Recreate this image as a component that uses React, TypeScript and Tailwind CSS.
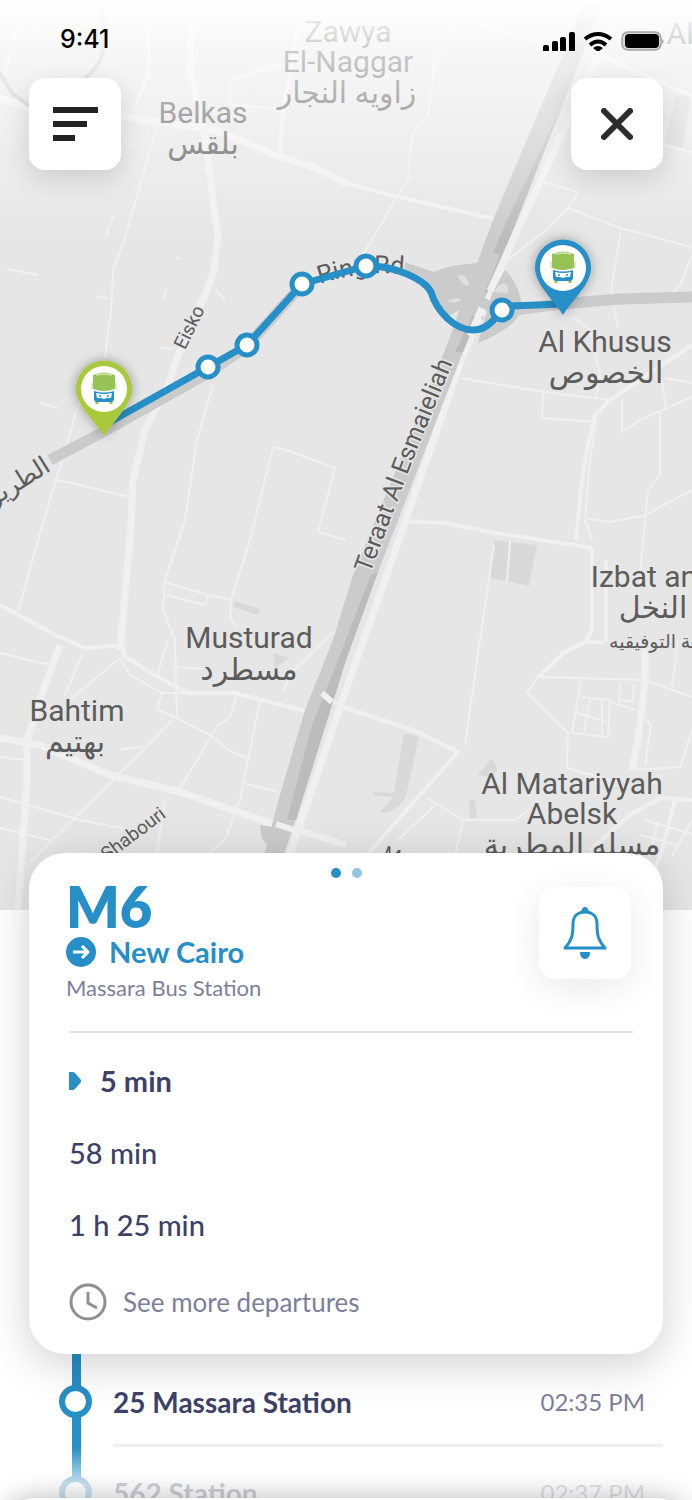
import React from "react";

// Light streets, thin ones first
const thinRoads = [
  "M158 122 L125 238 L113 270 L111 310 L105 358",
  "M230 105 L230 80 L280 65 M230 105 L275 108",
  "M458 15 L435 60 L428 115 L412 135 L408 180 L396 198 L372 240 L362 256",
  "M458 18 L565 52 M540 181 L578 192 L568 208 L540 235 L505 262",
  "M568 208 L620 228 L692 247 M621 230 L611 290 L618 328",
  "M692 255 L680 285 L666 300 L611 296 M563 124 L571 124 M664 145 L692 152",
  "M460 378 L520 388 L560 394 L610 400 M543 392 L542 418 L596 422",
  "M596 422 L590 460 L585 520 L592 540 M575 318 L590 330 L600 375 L596 398",
  "M622 398 L622 432 L640 420 L692 397 M660 410 L660 475 L648 490 L645 520 L640 575",
  "M585 518 L610 522 L645 515 L692 490 M666 378 L692 383 M662 380 L666 410",
  "M213 385 L197 440 L185 520 L165 580 L163 610 L175 640 L177 717",
  "M346 540 L318 532 L335 468 L286 450 L273 447 L250 540 L231 600 L230 618 L236 626",
  "M80 400 L65 450 L38 540 L18 612 M58 480 L130 497",
  "M120 658 L130 675 L162 693 L235 693 M82 655 L65 695 M120 658 L70 700",
  "M0 653 L50 665 M165 582 L208 595 L232 600 M166 595 L205 605 L208 595",
  "M162 693 L157 709 L175 717 L123 770 L30 862",
  "M175 717 L210 735 L228 750 L247 758 M237 693 L230 718 L218 725 L180 788",
  "M165 800 L157 853 M260 700 L240 800 L225 840 L210 853",
  "M0 797 L80 820 L130 830 M243 783 L278 792 M0 828 L50 840 M0 757 L24 760",
  "M120 750 L143 746 M168 640 L157 676 M177 667 L202 669 M283 692 L292 672 L333 632",
  "M494 545 L480 640 L465 745 M510 540 L507 582",
  "M538 677 L527 692 L568 733 L567 768 L610 780 M538 677 L645 680 L692 697",
  "M581 680 L572 733 L608 737 L610 700 L582 697 M577 713 L606 722 M590 698 L584 734 M602 698 L602 736",
  "M610 702 L636 710 M620 683 L619 704 M634 684 L633 701 L620 700 M678 640 L672 687",
  "M692 730 L680 767 L635 770 M646 720 L651 725 L645 765",
  "M427 798 L463 820 L515 820 L530 808 M463 820 L455 856 M434 806 L396 842",
  "M692 820 L672 856 M644 820 L692 834 M640 835 L680 846 M658 822 L650 853",
  "M20 15 L5 75 M38 0 L37 32 M82 12 L84 32 M0 38 L38 40 M113 215 L106 237",
  "M7 269 L38 275 M97 296 L108 299 M161 347 L172 349 M176 258 L180 258 M166 289 L164 298 M216 290 L225 300 M40 403 L58 408 M125 142 L132 146",
];

const midRoads = [
  "M133 112 L148 75 L150 0",
  "M303 0 L283 110 L280 155",
  "M346 183 L390 195 L495 219",
  "M600 55 L692 96",
  "M692 345 L640 380 L610 400 L595 415 L588 445 L582 480 L576 540",
  "M405 521 L445 523 L490 532 L592 548",
  "M0 605 L55 635 L85 648 L122 645 L125 657 L155 675 L187 693 L235 693 L305 711",
  "M322 693 L332 702 L346 708 L415 731 L458 752 L420 795 L380 840 L345 880",
  "M605 642 L585 642 L565 652 L538 677",
  "M592 548 L592 630 L585 642",
  "M590 850 L630 815 L660 798 L692 800 M675 800 L662 850 L640 910",
  "M606 560 L606 642",
];

const wideRoads = [
  "M0 98 L29 108 L70 108 L158 122 L215 130 L240 140 L275 155 L310 166 L346 183",
  "M192 0 L190 72 L197 100 L205 135 L215 215 L218 235 L214 270 L205 295 L180 350 L168 385 L150 420 L145 430 L133 480 L130 540 L120 650",
  "M0 738 L40 745 L110 775 L180 792 L276 825 L298 830 L346 845",
  "M60 645 L45 685 L27 740 L27 780 L18 910",
  "M645 640 L645 680 L638 740 L632 770",
  "M624 0 L513 240 L462 358 L385 580 L346 690 L298 830 L288 860",
];

const places = [
  { text: "Zawya", x: 348, y: 42 },
  { text: "El-Naggar", x: 348, y: 72 },
  { text: "زاويه النجار", x: 347, y: 103 },
  { text: "Belkas", x: 203, y: 123 },
  { text: "بلقس", x: 203, y: 154 },
  { text: "Al", x: 680, y: 44 },
  { text: "Al Khusus", x: 605, y: 352 },
  { text: "الخصوص", x: 606, y: 383 },
  { text: "Musturad", x: 249, y: 648 },
  { text: "مسطرد", x: 249, y: 680 },
  { text: "Bahtim", x: 77, y: 721 },
  { text: "بهتيم", x: 75, y: 752 },
  { text: "Izbat an", x: 644, y: 587 },
  { text: "النخل", x: 653, y: 618 },
  { text: "Al Matariyyah", x: 572, y: 794 },
  { text: "Abelsk", x: 572, y: 824 },
  { text: "مسله المطرية", x: 572, y: 855 },
];

const stops = [
  [208, 367],
  [247, 345],
  [302, 284],
  [366, 266],
  [502, 310],
];

const departures = [
  { label: "5 min", next: true },
  { label: "58 min", next: false },
  { label: "1 h 25 min", next: false },
];

const stations = [
  { name: "25 Massara Station", time: "02:35 PM" },
  { name: "562 Station", time: "02:37 PM" },
];

const Pin = ({ x, y, color }: { x: number; y: number; color: string }) => (
  <g transform={`translate(${x} ${y})`}>
    <path
      d="M0 47 C-5 38 -19 24 -24 14 A28 28 0 1 1 24 14 C19 24 5 38 0 47 Z"
      fill={color}
      filter="url(#pinShadow)"
    />
    <circle r="23" fill="#fff" />
    {/* bus */}
    <path d="M-11 -14 Q0 -19 11 -14 V0 Q0 4 -11 0 Z" fill="#95c355" />
    <path d="M-8 -14 Q0 -16 8 -14" fill="none" stroke="#d3e8b4" strokeWidth="1.5" />
    <path d="M-12 -6 V0 M12 -6 V0" stroke="#b5d78a" strokeWidth="1" />
    <path d="M-7 12 V15 M7 12 V15" stroke="#95c355" strokeWidth="3" />
    <path d="M-10 2 Q0 5 10 2 V10 Q10 13 6 13 H-6 Q-10 13 -10 10 Z" fill="#268fc7" />
    <path d="M-8 4 Q0 6 8 4 L7 9 H3 L0 10 L-3 9 H-7 Z" fill="#fff" />
    <circle cx="-4" cy="7" r="1" fill="#268fc7" />
    <circle cx="4" cy="7" r="1" fill="#268fc7" />
  </g>
);

const CityMap = () => (
  <svg
    className="block h-full w-full"
    viewBox="0 0 692 910"
    preserveAspectRatio="xMidYMin slice"
    role="img"
    aria-label="M6"
    fontFamily='Roboto, "DejaVu Sans", sans-serif'
  >
    <defs>
      <filter id="pinShadow" x="-50%" y="-50%" width="200%" height="200%">
        <feDropShadow dx="0" dy="0" stdDeviation="6" floodColor="#000" floodOpacity="0.35" />
      </filter>
      <linearGradient id="topFade" x1="0" y1="0" x2="0" y2="1">
        <stop offset="0" stopColor="#fff" />
        <stop offset="0.2" stopColor="#fff" stopOpacity="0.7" />
        <stop offset="1" stopColor="#fff" stopOpacity="0" />
      </linearGradient>
      <path id="ringRoad" d="M320 284 Q366 268 415 276" />
      <path id="canalRoad" d="M370 574 L412 462 L462 340" />
    </defs>
    <rect width="692" height="910" fill="#e6e6e6" />

    {/* blocks */}
    <g fill="#d9d9d9">
      <path d="M494 540 L537 545 L529 586 L490 578 Z" />
      <path d="M404 733 L419 737 L406 796 Q396 814 380 812 L393 797 L373 795 L373 792 L394 793 Z" />
      <path d="M235 601 L260 609 L258 615 L233 607 Z" />
      <path d="M273 653 L290 658 L275 668 Z" />
      <path d="M675 98 L692 92 L682 148 L665 143 Z" />
      <path d="M478 775 L492 758 L497 768 L494 778 Z M469 800 H475 L477 818 H470 Z" />
    </g>

    <g fill="none" stroke="#f0f0f0" strokeLinejoin="round">
      {thinRoads.map((d) => (
        <path key={d} d={d} strokeWidth="2" />
      ))}
      {midRoads.map((d) => (
        <path key={d} d={d} strokeWidth="4" />
      ))}
      {wideRoads.map((d) => (
        <path key={d} d={d} strokeWidth="7" />
      ))}
    </g>
    <path
      d="M-2 70 L12 93 L30 106 L60 112 M97 0 Q109 25 102 55 Q98 68 85 78"
      fill="none"
      stroke="#c6c6c6"
      strokeWidth="4"
    />

    {/* canal */}
    <path
      d="M586 0 L604 0 L517 220 L463 352 L378 572 L346 660 L295 822 L282 860 L263 860 L277 805 L305 710 L333 640 L353 575 L445 350 L493 220 Z"
      fill="#cbcbcb"
    />
    <path
      d="M563 104 L517 220 L487 293 L478 290 L507 220 Z M478 304 L483 304 L463 352 L455 352 Z M371 575 L378 572 L346 660 L296 820 L287 820 L312 725 L338 660 Z"
      fill="#bcbcbc"
    />
    <path d="M260 825 L277 828 L272 852 L262 838 Z" fill="#cbcbcb" />
    <path d="M276 824 L300 832 M322 693 L332 702" stroke="#f0f0f0" strokeWidth="6" />

    {/* ring road */}
    <g fill="none" stroke="#cbcbcb" strokeWidth="11">
      <path d="M50 460 L103 432 L208 373 L247 346 L300 287" />
      <path d="M404 268 L440 280 L500 312 L560 304 L620 299 L692 297" />
    </g>
    <path
      d="M404 262 L434 272 Q448 266 458 265 L478 263 Q484 258 487 250 L500 255 L490 280 L480 300 L484 320 L460 310 L444 318 L430 296 Z"
      fill="#cbcbcb"
    />
    <path d="M505 270 Q516 280 521 300 L519 315 Q510 330 478 343 L484 322 L492 293 Z" fill="#cbcbcb" />
    <path d="M458 276 Q466 272 469 285 Q462 287 458 276 M448 301 Q456 296 462 300 Q456 305 448 301 M494 292 Q500 281 506 284 Q509 288 508 293 Z" fill="#dedede" />
    <path d="M513 240 L490 291 M482 308 L470 336" stroke="#f0f0f0" strokeWidth="7" />

    {/* road names */}
    <g fill="#5c5c5c" stroke="#e6e6e6" strokeWidth="3" paintOrder="stroke">
      <text fontSize="25">
        <textPath href="#ringRoad">Ring Rd</textPath>
      </text>
      <text fontSize="25">
        <textPath href="#canalRoad">Teraat Al Esmaieliah</textPath>
      </text>
      <text fontSize="19" textAnchor="middle" transform="translate(195 330) rotate(-64)">
        Eisko
      </text>
      <text fontSize="19" textAnchor="middle" transform="translate(137 839) rotate(-37)">
        Shabouri
      </text>
      <text fontSize="25" direction="rtl" transform="translate(52 470) rotate(-32)">
        الطريق
      </text>
      <text fontSize="19" transform="translate(382 858) rotate(20)">
        M
      </text>
      <text fontSize="19" direction="rtl" textAnchor="end" x="609" y="648">
        ترعة التوفيقيه
      </text>
    </g>

    <g fill="#5c5c5c" stroke="#e6e6e6" strokeWidth="2" paintOrder="stroke" textAnchor="middle">
      {places.map((p) => (
        <text key={p.text} x={p.x} y={p.y} fontSize="30">
          {p.text}
        </text>
      ))}
    </g>
    <rect width="692" height="240" fill="url(#topFade)" />

    {/* route */}
    <path
      d="M110 422 L208 367 L247 345 L302 284 L366 266 C395 265 425 280 431 292 C437 312 455 330 473 330 C487 330 493 320 502 311 L511 306 L563 304"
      fill="none"
      stroke="#268fc7"
      strokeWidth="7"
      strokeLinejoin="round"
    />
    {stops.map(([cx, cy]) => (
      <circle key={cx} cx={cx} cy={cy} r="10" fill="#fff" stroke="#268fc7" strokeWidth="5" />
    ))}
    <Pin x={104} y={389} color="#a9c93c" />
    <Pin x={563} y={268} color="#268fc7" />
  </svg>
);

const StatusBar = () => (
  <div className="flex items-center justify-between pt-6 pr-[28px] pl-[60px]">
    <span className="font-['Inter',sans-serif] text-[25px] leading-[30px] font-medium text-black">9:41</span>
    <svg className="h-[24px] w-[124px]" viewBox="0 0 124 24" aria-hidden="true">
      <rect x="3" y="18" width="6" height="7" rx="2" />
      <rect x="12" y="14" width="6" height="11" rx="2" />
      <rect x="20" y="10" width="6" height="15" rx="2" />
      <rect x="29" y="5" width="6" height="20" rx="2" />
      <g fill="none" stroke="#000" strokeWidth="4">
        <path d="M45 12 Q58 2 71 12" />
        <path d="M50 18 Q58 11 66 18" />
      </g>
      <path d="M53 21 Q58 17 63 21 L58 25 Z" />
      <rect x="82" y="5" width="39" height="18" rx="6" fill="#d9d9d9" stroke="#a3a3a3" strokeWidth="1.5" />
      <rect x="85" y="7" width="34" height="14" rx="4" />
      <path d="M122 12 Q125 14 122 17 Z" fill="#a3a3a3" />
    </svg>
  </div>
);

export default function App() {
  return (
    <main className="relative h-screen overflow-hidden bg-white font-['Lato',sans-serif] text-[#3c4166]">
      <section className="relative h-[910px]">
        <CityMap />
        <div className="absolute inset-x-0 top-0">
          <StatusBar />
          <div className="mt-6 flex justify-between px-[29px]">
            <button
              aria-label="Menu"
              className="flex size-[92px] items-center justify-center rounded-2xl bg-white shadow-[0_8px_28px_rgba(0,0,0,0.14)]"
            >
              <svg className="h-[34px] w-[45px]" viewBox="0 0 45 34" fill="#222">
                <rect y="0" width="45" height="6" />
                <rect y="14" width="34" height="6" />
                <rect y="28" width="22" height="6" />
              </svg>
            </button>
            <button
              aria-label="Close"
              className="flex size-[92px] items-center justify-center rounded-2xl bg-white shadow-[0_8px_28px_rgba(0,0,0,0.14)]"
            >
              <svg className="size-8" viewBox="0 0 32 32" stroke="#2d2d2d" strokeWidth="6" strokeLinecap="round">
                <path d="M3 3 L29 29 M29 3 L3 29" />
              </svg>
            </button>
          </div>
        </div>
      </section>

      <section className="relative z-10 mx-[29px] -mt-[57px] rounded-[36px] bg-white pt-[15px] pb-[11px] shadow-[0_10px_44px_rgba(0,0,0,0.19)]">
        <div className="flex justify-center gap-[11px]">
          <span className="size-[10px] rounded-full bg-[#268fc7]" />
          <span className="size-[10px] rounded-full bg-[#92c7e3]" />
        </div>

        <header className="flex items-start justify-between pr-8 pl-[37px]">
          <div>
            <h1 className="text-[56px] leading-[58px] font-extrabold text-[#268fc7]">M6</h1>
            <h2 className="flex items-center gap-[13px] text-[29px] leading-8 font-bold text-[#268fc7]">
              <svg className="size-[30px]" viewBox="0 0 30 30" fill="none" stroke="#fff" strokeWidth="3">
                <circle cx="15" cy="15" r="15" fill="#268fc7" stroke="none" />
                <path d="M7 15 H21 M16 9 L22 15 L16 21" strokeLinejoin="round" />
              </svg>
              New Cairo
            </h2>
            <p className="mt-1 text-[22px] leading-8 text-[#7d7f9a]">Massara Bus Station</p>
          </div>
          <button
            aria-label="Notify me"
            className="mt-[9px] flex size-[92px] items-center justify-center rounded-2xl bg-white shadow-[0_8px_36px_rgba(0,0,0,0.09)]"
          >
            <svg className="h-[52px] w-[44px]" viewBox="0 0 44 52" fill="none">
              <path
                d="M22 5 C14 5 10 10 10 17 C10 28 9 33 2 41 H42 C35 33 34 28 34 17 C34 10 30 5 22 5 Z"
                stroke="#268fc7"
                strokeWidth="3"
                strokeLinejoin="round"
              />
              <path d="M18 5 Q19 0 22 0 Q25 0 26 5 Z M17 45 H27 Q27 52 22 52 Q17 52 17 45 Z" fill="#268fc7" />
            </svg>
          </button>
        </header>

        <hr className="mt-[27px] mr-[30px] ml-10 border-t-2 border-[#e2e2e2]" />

        <ul className="mt-3 pl-10 text-[29px] leading-8">
          {departures.map((d) => (
            <li
              key={d.label}
              className={
                d.next
                  ? "flex h-[72px] items-center gap-[19px] font-bold"
                  : "flex h-[72px] items-center font-medium"
              }
            >
              {d.next && (
                <svg className="h-[18px] w-3" viewBox="0 0 12 18" fill="#268fc7">
                  <path d="M0 0 H4 Q5 0 6 1 L12 8 Q12 9 12 10 L6 17 Q5 18 4 18 H0 Z" />
                </svg>
              )}
              {d.label}
            </li>
          ))}
        </ul>

        <button className="ml-10 flex h-[82px] items-center gap-4 text-[26px] leading-8 text-[#7d7f9a]">
          <svg className="size-[38px]" viewBox="0 0 38 38" fill="none" stroke="#8f8f8f" strokeWidth="3">
            <circle cx="19" cy="19" r="17" />
            <path d="M19 9 V20 L28 25" />
          </svg>
          See more departures
        </button>
      </section>

      <section className="relative">
        <ol className="pt-[2px] pr-[29px] pl-[59px]">
          {stations.map((s) => (
            <li key={s.name} className="flex h-[91px] gap-[21px]">
              <div className="relative flex w-[33px] shrink-0 items-center">
                <span className="absolute -top-[2px] bottom-0 left-[13px] w-[9px] bg-[#268fc7]" />
                <span className="relative size-[33px] rounded-full border-[6px] border-[#268fc7] bg-white" />
              </div>
              <div className="flex grow items-center justify-between border-b-[3px] border-[#efefef] pt-[3px] pr-[18px]">
                <span className="text-[28px] leading-8 font-bold">{s.name}</span>
                <time className="text-[24px] leading-8 text-[#7d7f9a]">{s.time}</time>
              </div>
            </li>
          ))}
        </ol>
        <div className="absolute inset-x-0 top-[94px] bottom-0 bg-linear-to-b from-white/0 to-white/75 to-[36px]" />
      </section>

      {/* next sheet, peeking from below */}
      <div className="absolute inset-x-0 -bottom-[70px] z-20 h-[72px] rounded-[36px] bg-white shadow-[0_0_28px_rgba(0,0,0,0.28)]" />
    </main>
  );
}
